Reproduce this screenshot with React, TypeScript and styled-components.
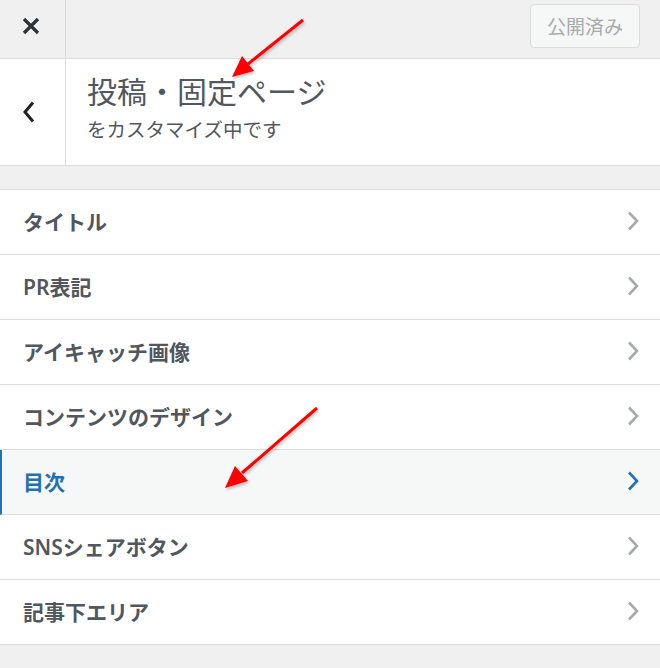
import React from 'react';
import styled, { createGlobalStyle } from 'styled-components';

const GlobalStyle = createGlobalStyle`
    html, body {
        margin: 0;
        padding: 0;
        background: #f0f0f1;
        font-family: "Noto Sans", "Noto Sans CJK JP", sans-serif;
        color: #50575e;
    }
`;

const sections = [
    { label: 'タイトル' },
    { label: 'PR表記' },
    { label: 'アイキャッチ画像' },
    { label: 'コンテンツのデザイン' },
    { label: '目次', active: true },
    { label: 'SNSシェアボタン' },
    { label: '記事下エリア' },
];

const RightChevron = ({ color }: { color: string }) => (
    <svg width="14" height="20" viewBox="0 0 14 20">
        <path d="M3 1.5 L11 10 L3 18.5" fill="none" stroke={color} strokeWidth="2.6" />
    </svg>
);

export default function App() {
    return (
        <React.Fragment>
            <GlobalStyle />
            <Panel>
                <TopBar>
                    <CloseButton aria-label="close">
                        <svg width="18" height="18" viewBox="0 0 18 18">
                            <path d="M2 2 L16 16 M16 2 L2 16" stroke="#2c3338" strokeWidth="3.2" />
                        </svg>
                    </CloseButton>
                    <Spacer />
                    <PublishButton disabled>公開済み</PublishButton>
                </TopBar>
                <Header>
                    <BackButton aria-label="back">
                        <svg width="14" height="22" viewBox="0 0 14 22">
                            <path d="M11 1.5 L3 11 L11 20.5" fill="none" stroke="#1d2327" strokeWidth="3" />
                        </svg>
                    </BackButton>
                    <TitleBlock>
                        <Title>投稿・固定ページ</Title>
                        <Subtitle>をカスタマイズ中です</Subtitle>
                    </TitleBlock>
                </Header>
                <SectionList>
                    {sections.map((s) => (
                        <SectionRow key={s.label} $active={!!s.active}>
                            <SectionLabel $active={!!s.active}>{s.label}</SectionLabel>
                            <RightChevron color={s.active ? '#2271b1' : '#a7aaad'} />
                        </SectionRow>
                    ))}
                </SectionList>
                <Annotations width="660" height="668" viewBox="0 0 660 668">
                    <defs>
                        <filter id="shadow" x="-20%" y="-20%" width="140%" height="140%">
                            <feDropShadow dx="1" dy="2" stdDeviation="1.5" floodColor="#000" floodOpacity="0.25" />
                        </filter>
                    </defs>
                    <g filter="url(#shadow)" fill="#f00" stroke="#f00">
                        <line x1="303" y1="20" x2="248" y2="64" strokeWidth="3" />
                        <polygon points="232,77 242,56 254,71" stroke="none" />
                        <line x1="317" y1="408" x2="242" y2="473" strokeWidth="3" />
                        <polygon points="225,488 235,466 248,481" stroke="none" />
                    </g>
                </Annotations>
            </Panel>
        </React.Fragment>
    );
}

const Panel = styled.div`
    position: relative;
    width: 660px;
    height: 668px;
    overflow: hidden;
    background: #f0f0f1;
`;

const TopBar = styled.div`
    display: flex;
    align-items: center;
    height: 58px;
    border-bottom: 1px solid #dcdcde;
`;

const CloseButton = styled.div`
    display: flex;
    align-items: center;
    justify-content: center;
    width: 66px;
    height: 100%;
    padding: 0 4px 7px 0;
    border-right: 1px solid #dcdcde;
    box-sizing: border-box;
`;

const Spacer = styled.div`
    flex: 1;
`;

const PublishButton = styled.button`
    margin-right: 20px;
    margin-top: -6px;
    width: 110px;
    height: 44px;
    border: 1px solid #dcdcde;
    border-radius: 4px;
    background: #f6f7f7;
    color: #a7aaad;
    font-family: "Noto Sans", "Noto Sans CJK JP", sans-serif;
    font-size: 19px;
`;

const Header = styled.div`
    display: flex;
    height: 106px;
    background: #fff;
    border-bottom: 1px solid #dcdcde;
`;

const BackButton = styled.div`
    display: flex;
    align-items: center;
    justify-content: center;
    width: 66px;
    padding-right: 7px;
    border-right: 1px solid #dcdcde;
    box-sizing: border-box;
`;

const TitleBlock = styled.div`
    padding: 13px 22px 0 21px;
`;

const Title = styled.div`
    font-size: 30px;
    line-height: 40px;
    color: #50575e;
`;

const Subtitle = styled.div`
    margin-top: 4px;
    font-size: 19.5px;
    line-height: 28px;
    color: #50575e;
`;

const SectionList = styled.div`
    margin-top: 23px;
    border-top: 1px solid #dcdcde;
`;

const SectionRow = styled.div<{ $active: boolean }>`
    display: flex;
    align-items: center;
    justify-content: space-between;
    height: 64px;
    padding: 0 20px 3px ${(p) => (p.$active ? '21px' : '23px')};
    box-sizing: border-box;
    background: ${(p) => (p.$active ? '#f6f7f7' : '#fff')};
    border-bottom: 1px solid #dcdcde;
    border-left: ${(p) => (p.$active ? '2px solid #2271b1' : 'none')};
    height: 65px;
`;

const SectionLabel = styled.span<{ $active: boolean }>`
    font-size: 21px;
    font-weight: 600;
    color: ${(p) => (p.$active ? '#2271b1' : '#50575e')};
`;

const Annotations = styled.svg`
    position: absolute;
    left: 0;
    top: 0;
    pointer-events: none;
`;
